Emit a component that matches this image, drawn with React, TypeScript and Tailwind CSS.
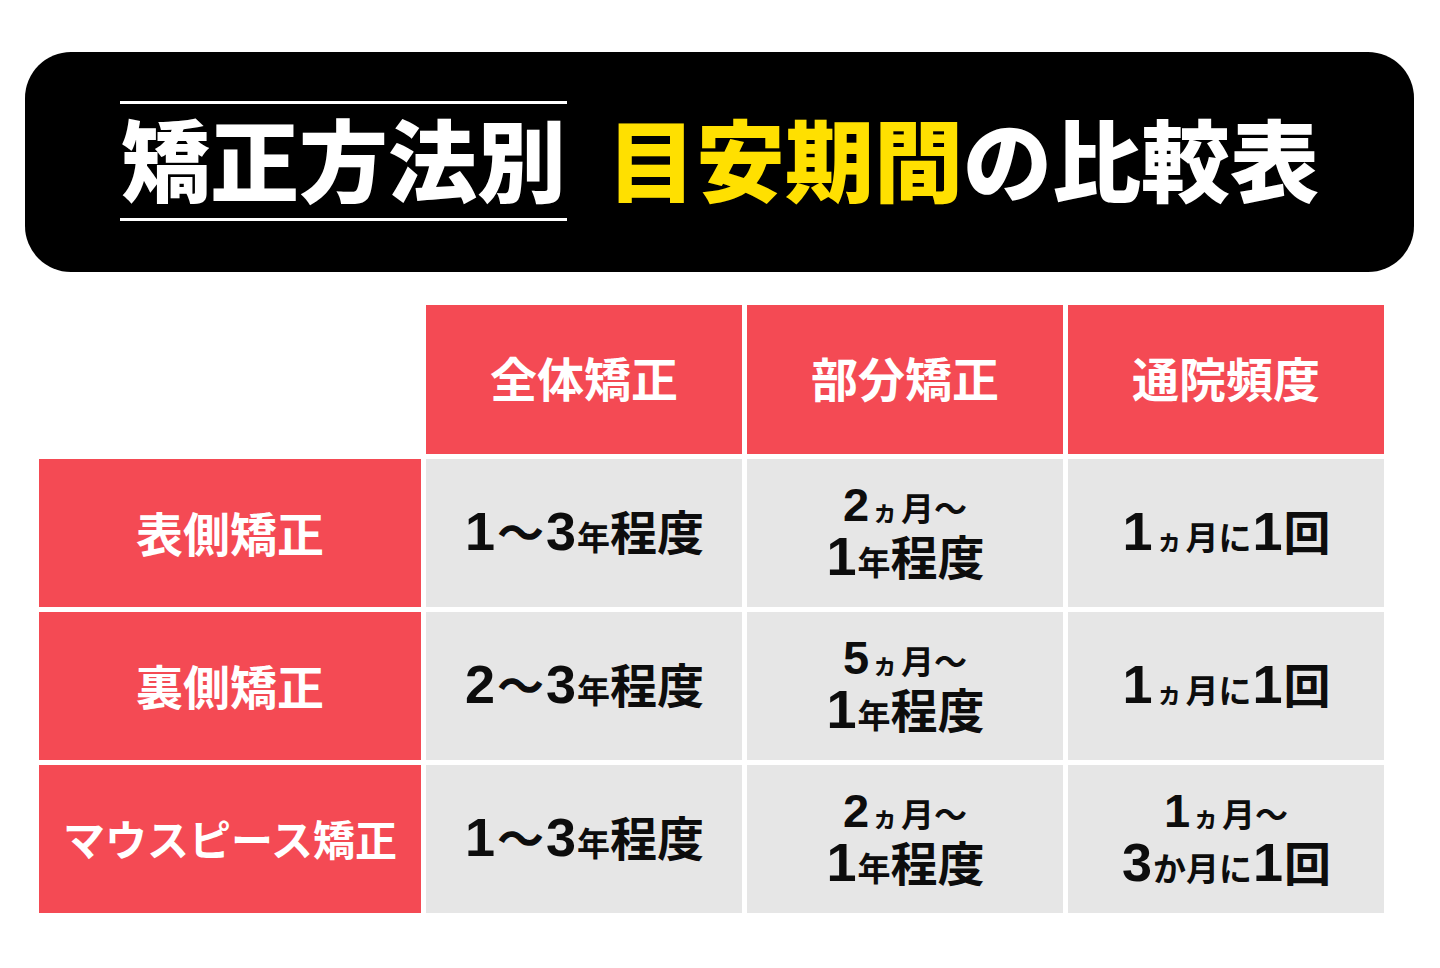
import React from "react";

// Numbers use a separate latin face, kana/kanji stay on Noto Sans CJK
const num = "font-['Liberation_Sans','Noto_Sans_CJK_JP',sans-serif] font-bold";

type Part = { t: string; k: "n" | "big" | "mid" | "sm" | "wave" | "bign" };

const cls: Record<Part["k"], string> = {
  bign: `${num} text-[54px] mx-[1px]`,
  n: `${num} text-[47px]`,
  big: "text-[47px]",
  mid: "text-[33px]",
  sm: "text-[26px] mx-[3px]",
  wave: "text-[47px] mx-[1px]",
};

function Line({ parts }: { parts: Part[] }) {
  return (
    <div className="flex items-baseline justify-center leading-[0.8]">
      {parts.map((p, i) => (
        <span key={i} className={cls[p.k]}>
          {p.t}
        </span>
      ))}
    </div>
  );
}

const yearRange = (a: string): Part[] => [
  { t: a, k: "bign" },
  { t: "〜", k: "wave" },
  { t: "3", k: "bign" },
  { t: "年", k: "mid" },
  { t: "程度", k: "big" },
];

const monthToYear = (a: string): Part[][] => [
  [
    { t: a, k: "n" },
    { t: "ヵ", k: "sm" },
    { t: "月〜", k: "mid" },
  ],
  [
    { t: "1", k: "bign" },
    { t: "年", k: "mid" },
    { t: "程度", k: "big" },
  ],
];

const onceMonth: Part[] = [
  { t: "1", k: "bign" },
  { t: "ヵ", k: "sm" },
  { t: "月に", k: "mid" },
  { t: "1", k: "bign" },
  { t: "回", k: "big" },
];

const rows = [
  { label: "表側矯正", size: "text-[47px]", cells: [[yearRange("1")], monthToYear("2"), [onceMonth]] },
  { label: "裏側矯正", size: "text-[47px]", cells: [[yearRange("2")], monthToYear("5"), [onceMonth]] },
  {
    label: "マウスピース矯正",
    size: "text-[42px]",
    cells: [
      [yearRange("1")],
      monthToYear("2"),
      [
        [
          { t: "1", k: "n" },
          { t: "ヵ", k: "sm" },
          { t: "月〜", k: "mid" },
        ] as Part[],
        [
          { t: "3", k: "bign" },
          { t: "か", k: "mid" },
          { t: "月に", k: "mid" },
          { t: "1", k: "bign" },
          { t: "回", k: "big" },
        ] as Part[],
      ],
    ],
  },
];

const heads = ["全体矯正", "部分矯正", "通院頻度"];

export default function App() {
  return (
    <div className="w-[1440px] h-[968px] bg-white overflow-hidden font-['Noto_Sans_CJK_JP',sans-serif] font-bold">
      {/* Title banner */}
      <div className="ml-[25px] mt-[52px] w-[1389px] h-[220px] rounded-[46px] bg-black flex items-center pl-[95px]">
        <div className="w-[447px] h-[120px] -mt-[3px] border-y-[3px] border-white flex items-center justify-center pb-[8px] text-white text-[89px] leading-none font-black">
          矯正方法別
        </div>
        <div className="ml-[40px] pb-[12px] text-[89px] leading-none font-black text-white">
          <span className="text-[#ffe000]">目安期間</span>の比較表
        </div>
      </div>

      {/* Comparison table */}
      <div className="ml-[39px] mt-[33px] grid grid-cols-[382px_316px_316px_316px] grid-rows-[149px_148px_148px_148px] gap-[5px]">
        <div />
        {heads.map((h) => (
          <div key={h} className="bg-[#f44a54] text-white text-[47px] leading-none pb-[6px] flex items-center justify-center">
            {h}
          </div>
        ))}
        {rows.map((r) => (
          <React.Fragment key={r.label}>
            <div className={`bg-[#f44a54] text-white ${r.size} leading-none pb-[3px] flex items-center justify-center`}>
              {r.label}
            </div>
            {r.cells.map((lines, i) => (
              <div key={i} className="bg-[#e6e6e6] text-[#0d0d0d] flex flex-col items-center justify-center gap-[12px] pb-[2px]">
                {lines.map((parts, j) => (
                  <Line key={j} parts={parts} />
                ))}
              </div>
            ))}
          </React.Fragment>
        ))}
      </div>
    </div>
  );
}
